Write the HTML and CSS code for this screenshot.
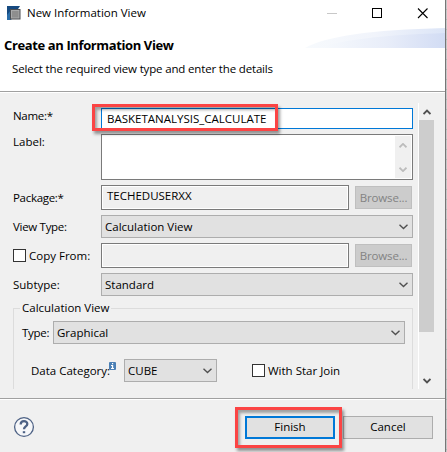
FILE: index.html
```html
<!DOCTYPE html>
<html lang="en">
<head>
<meta charset="utf-8">
<title>New Information View</title>
<link rel="stylesheet" href="styles.css">
</head>
<body>
<main class="dialog">
  <header class="header">
    <div class="titlebar">
      <svg class="app-icon" width="14" height="14" viewBox="0 0 14 14">
        <path d="M0 0H13L4 14H0Z" fill="#164a80"/><path d="M0 9L4 4V14H0Z" fill="#2b6da8"/>
        <rect x="3" y="3" width="10.5" height="10.5" fill="#4d4f52"/>
        <rect x="4.5" y="4.5" width="7.5" height="7.5" fill="#8e8e8e" stroke="#a9aaab"/>
      </svg>
      <span class="title">New Information View</span>
      <svg class="controls" width="104" height="12" viewBox="0 0 104 12" fill="none" shape-rendering="crispEdges">
        <path d="M1 6.5H11" stroke="#c8c8c8"/>
        <rect x="46.5" y="1.5" width="9" height="9" stroke="#000"/>
        <path d="M92 1.5L101.500 11M101.500 1.500L92 11" stroke="#000" stroke-width="1.1" shape-rendering="auto"/>
      </svg>
    </div>
    <svg class="swoosh" width="140" height="20" viewBox="0 0 140 20">
      <defs>
        <linearGradient id="a"><stop offset="0" stop-color="#f7fafd"/><stop offset=".5" stop-color="#f1f4fb"/><stop offset="1" stop-color="#dce5f7"/></linearGradient>
        <linearGradient id="b"><stop offset="0" stop-color="#f7fafd"/><stop offset=".55" stop-color="#e8edf9"/><stop offset="1" stop-color="#d2dcf4"/></linearGradient>
      </defs>
      <path d="M0 20C22 8 65 2 140 0V20Z" fill="url(#a)"/>
      <path d="M12 20C45 10 85 7 140 5V20Z" fill="url(#b)"/>
    </svg>
    <h1 class="heading">Create an Information View</h1>
    <p class="subheading">Select the required view type and enter the details</p>
  </header>

  <section class="body">
    <form class="form">
      <div class="row row-name">
        <label class="tight">Name:*</label>
        <div class="field focus"><span>BASKETANALYSIS_CALCULATE</span><i class="mark mark-name"></i></div>
      </div>
      <div class="row row-label">
        <label>Label:</label>
        <div class="field area">
          <div class="area-scroll">
            <svg width="8" height="5" viewBox="0 0 8 5"><path d="M.5 4.300L4 .9L7.500 4.300" fill="none" stroke="#bcbcbc" stroke-width="1.8"/></svg>
            <svg width="8" height="5" viewBox="0 0 8 5"><path d="M.5 .7L4 4.100L7.500 .7" fill="none" stroke="#bcbcbc" stroke-width="1.8"/></svg>
          </div>
        </div>
      </div>
      <div class="row row-package">
        <label class="tight">Package:*</label>
        <div class="field readonly"><span>TECHEDUSERXX</span></div>
        <div class="button disabled">Browse...</div>
      </div>
      <div class="row row-type">
        <label class="tight">View Type:</label>
        <div class="combo"><span>Calculation View</span><svg class="chev" width="9" height="6" viewBox="0 0 9 6"><path d="M.5 .8L4.500 4.500L8.500 .8"/></svg></div>
      </div>
      <div class="row row-copy">
        <label class="check"><i class="box"></i><span>Copy From:</span></label>
        <div class="field readonly"></div>
        <div class="button disabled">Browse...</div>
      </div>
      <div class="row row-sub">
        <label>Subtype:</label>
        <div class="combo"><span>Standard</span><svg class="chev" width="9" height="6" viewBox="0 0 9 6"><path d="M.5 .8L4.500 4.500L8.500 .8"/></svg></div>
      </div>
      <div class="group">
        <div class="legend"><span>Calculation View</span></div>
        <div class="group-type">
          <label class="tight">Type:</label>
          <div class="combo"><span>Graphical</span><svg class="chev" width="9" height="6" viewBox="0 0 9 6"><path d="M.5 .8L4.500 4.500L8.500 .8"/></svg></div>
        </div>
        <div class="group-cat">
          <label class="category">Data Category:</label>
          <svg class="info" width="7" height="8" viewBox="0 0 7 8"><rect width="7" height="8" rx="1" fill="#4a7fb5"/><path d="M3 1H4.200V2.200H3ZM2 3H4.200V6H5V7H2V6H2.900V4H2Z" fill="#fff"/></svg>
          <div class="combo"><span>CUBE</span><svg class="chev" width="9" height="6" viewBox="0 0 9 6"><path d="M.5 .8L4.500 4.500L8.500 .8"/></svg></div>
          <label class="check"><i class="box"></i><span>With Star Join</span></label>
        </div>
      </div>
    </form>
    <div class="scrollbar">
      <svg width="8" height="6" viewBox="0 0 8 6"><path d="M.5 5L4 1.500L7.500 5" fill="none" stroke="#505050" stroke-width="1.9"/></svg>
      <div class="thumb"></div>
      <svg width="8" height="6" viewBox="0 0 8 6"><path d="M.5 1L4 4.500L7.500 1" fill="none" stroke="#505050" stroke-width="1.9"/></svg>
    </div>
  </section>

  <footer class="footer">
    <svg class="help" width="22" height="22" viewBox="0 0 22 22" fill="none" stroke="#4e6285">
      <circle cx="11" cy="11" r="9.400" fill="#f6f7f9" stroke-width="1.300"/>
      <path d="M7.700 8.400C7.700 4 14.300 4.200 14.300 8C14.300 10.500 11 10.300 11 13.300" stroke-width="2.300"/>
      <path d="M9.800 15.200H12.200V17.200H9.800Z" fill="#4e6285" stroke="none"/>
    </svg>
    <div class="button default">Finish<i class="mark mark-finish"></i></div>
    <div class="button">Cancel</div>
  </footer>
</main>
</body>
</html>
```
FILE: styles.css
```css
* { box-sizing: border-box; }
body {
  margin: 0;
  width: 447px;
  height: 452px;
  overflow: hidden;
  background: repeating-linear-gradient(#c9c9c9 0 9px, #b4b4b4 9px 10px);
  font: 11.5px/16px "Open Sans", "Noto Sans", sans-serif;
  color: #000;
}
.dialog {
  width: 446px;
  height: 452px;
  display: flex;
  flex-direction: column;
  background: #f0f0f0;
  border-right: 1px solid #777;
}
span, label { white-space: nowrap; }

.header {
  position: relative;
  height: 93px;
  background: #fff;
  border-bottom: 1px solid #fff;
  box-shadow: inset 0 -1px #a0a0a0;
}
.titlebar { display: flex; align-items: center; height: 26px; padding: 0 15px 0 7px; }
.title { margin-left: 6px; }
.controls { margin-left: auto; }
.swoosh { position: absolute; right: 0; top: 28px; }
.heading { margin: 10px 0 0 4px; font-size: 13px; line-height: 18px; font-weight: 700; letter-spacing: -.38px; }
.subheading { margin: 7px 0 0 12px; letter-spacing: -.16px; }

.body { display: flex; height: 306px; padding: 10px 11px 0 5px; border-bottom: 1px solid #a0a0a0; }
.form { width: 408px; height: 286px; padding: 5px 0 0 8px; overflow: hidden; display: flex; flex-direction: column; }
.row { display: flex; flex: none; align-items: center; }
.row > label { width: 88px; flex: none; }
.tight { letter-spacing: -.3px; }
.row-name { height: 21px; margin-bottom: 5px; }
.row-name > label { margin-top: -5px; }
.row-label { height: 46px; margin-bottom: 5px; align-items: flex-start; }
.row-package { height: 25px; margin-bottom: 5px; }
.row-type { height: 23px; margin-bottom: 5px; }
.row-copy { height: 25px; margin-bottom: 5px; }
.row-sub { height: 23px; }

.field {
  flex: 1;
  height: 100%;
  display: flex;
  align-items: center;
  padding-left: 5px;
  background: #fff;
  border: 1px solid #7a7a7a;
}
.focus { position: relative; border-color: #0078d7; }
.area { justify-content: flex-end; padding: 1px; }
.area-scroll {
  width: 16px;
  height: 42px;
  padding: 7px 0 6px;
  display: flex;
  flex-direction: column;
  align-items: center;
  justify-content: space-between;
  background: #f0f0f0;
}
.readonly { flex: none; width: 248px; background: #f0f0f0; box-shadow: inset 0 0 0 1px #fff; padding-bottom: 3px; }
.button {
  width: 90px;
  height: 23px;
  display: flex;
  align-items: center;
  justify-content: center;
  background: #e1e1e1;
  border: 1px solid #adadad;
}
.disabled { width: 57px; margin-left: 6px; background: #ccc; border-color: #bfbfbf; color: #838383; letter-spacing: -.15px; }
.combo {
  flex: 1;
  height: 23px;
  display: flex;
  align-items: center;
  justify-content: space-between;
  padding: 0 4px 0 3px;
  background: #e1e1e1;
  border: 1px solid #adadad;
}
.chev path { fill: none; stroke: #505050; stroke-width: 1.4; }
.check { display: flex; align-items: center; }
.box { width: 13px; height: 13px; margin-right: 3px; flex: none; background: #fff; border: 1px solid #333; }

.mark { position: absolute; z-index: 2; border: 3px solid #fb4444; box-shadow: 2px 3px 3px #0006, inset 2px 3px 3px #0005; }
.mark-name { left: -10px; top: -5px; width: 186px; height: 27px; }
.mark-finish { left: -12px; top: -11px; width: 107px; height: 41px; }

.group { height: 100px; flex: none; margin-top: 12px; border: 1px solid #dcdcdc; }
.legend { display: flex; align-items: flex-start; height: 12px; margin-left: 6px; }
.legend span { margin-top: -9px; padding: 0 2px; background: #f0f0f0; }
.group-type { display: flex; align-items: center; padding: 0 7px 0 8px; }
.group-type > label { width: 31px; }
.group-cat { display: flex; align-items: center; margin: 15px 0 0 17px; }
.category { width: 78px; }
.group-cat > .combo { flex: none; width: 93px; margin-left: 8px; }
.group-cat > .check { margin-left: 35px; }
.info { margin-top: -10px; }

.scrollbar {
  width: 16px;
  height: 286px;
  margin-left: 5px;
  display: flex;
  flex-direction: column;
  align-items: center;
  border-left: 1px solid #fff;
  padding: 6px 0 5px;
}
.thumb { width: 15px; height: 212px; margin: 5px 0 auto; background: #cdcdcd; }

.footer { height: 53px; display: flex; align-items: center; padding: 2px 12px 0 13px; border-top: 1px solid #fff; }
.default { position: relative; margin: 0 8px 0 auto; border: 2px solid #0078d7; }
```
